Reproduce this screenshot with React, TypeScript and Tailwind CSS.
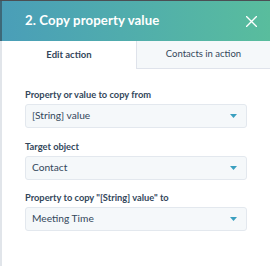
import React from "react";

function Caret() {
  return (
    <svg width="7" height="4" viewBox="0 0 7 4" className="shrink-0">
      <path d="M0 0 L7 0 L3.5 4 Z" fill="#3a9fbf" />
    </svg>
  );
}

function Field({ label, value }: { label: string; value: string }) {
  return (
    <div className="flex flex-col">
      <div className="text-[9.3px] leading-[12px] font-bold text-[#33475b] mb-[3px]">{label}</div>
      <div className="h-[24px] w-[222px] flex items-center justify-between bg-[#f5f8fa] border border-[#e3e8ee] rounded-[3px] pl-[6px] pr-[9px]">
        <span className="text-[10.2px] text-[#33475b]">{value}</span>
        <Caret />
      </div>
    </div>
  );
}

export default function App() {
  return (
    <div
      className="w-[270px] h-[266px] bg-white flex flex-col overflow-hidden"
      style={{ fontFamily: "Lato, 'Noto Sans', sans-serif" }}
    >
      <div className="h-[1px] bg-[#4b4f54]" />
      <div className="h-[40px] flex items-center justify-between pl-[23px] pr-[13px] border-l-2 border-[#3d6878] bg-gradient-to-r from-[#4a9eb8] to-[#59bd9d]">
        <span className="text-[13.2px] font-bold text-white tracking-[0.1px]">2. Copy property value</span>
        <svg width="11" height="11" viewBox="0 0 11 11">
          <path d="M0.5 0.5 L10.5 10.5 M10.5 0.5 L0.5 10.5" stroke="white" strokeWidth="1.4" strokeLinecap="round" />
        </svg>
      </div>
      <div className="flex-1 flex flex-col border-l-2 border-[#e1e5ea]">
        <div className="h-[28px] flex">
          <div className="w-[134px] flex items-center justify-center text-[9.5px] font-bold text-[#33475b]">Edit action</div>
          <div className="flex-1 flex items-center justify-center bg-[#f5f8fa] border-l border-b border-[#dfe3eb] text-[9.5px] text-[#33475b]">
            Contacts in action
          </div>
        </div>
        <div className="flex flex-col gap-[12.5px] pl-[23px] pt-[20px]">
          <Field label="Property or value to copy from" value="[String] value" />
          <Field label="Target object" value="Contact" />
          <Field label={'Property to copy "[String] value" to'} value="Meeting Time" />
        </div>
      </div>
    </div>
  );
}
